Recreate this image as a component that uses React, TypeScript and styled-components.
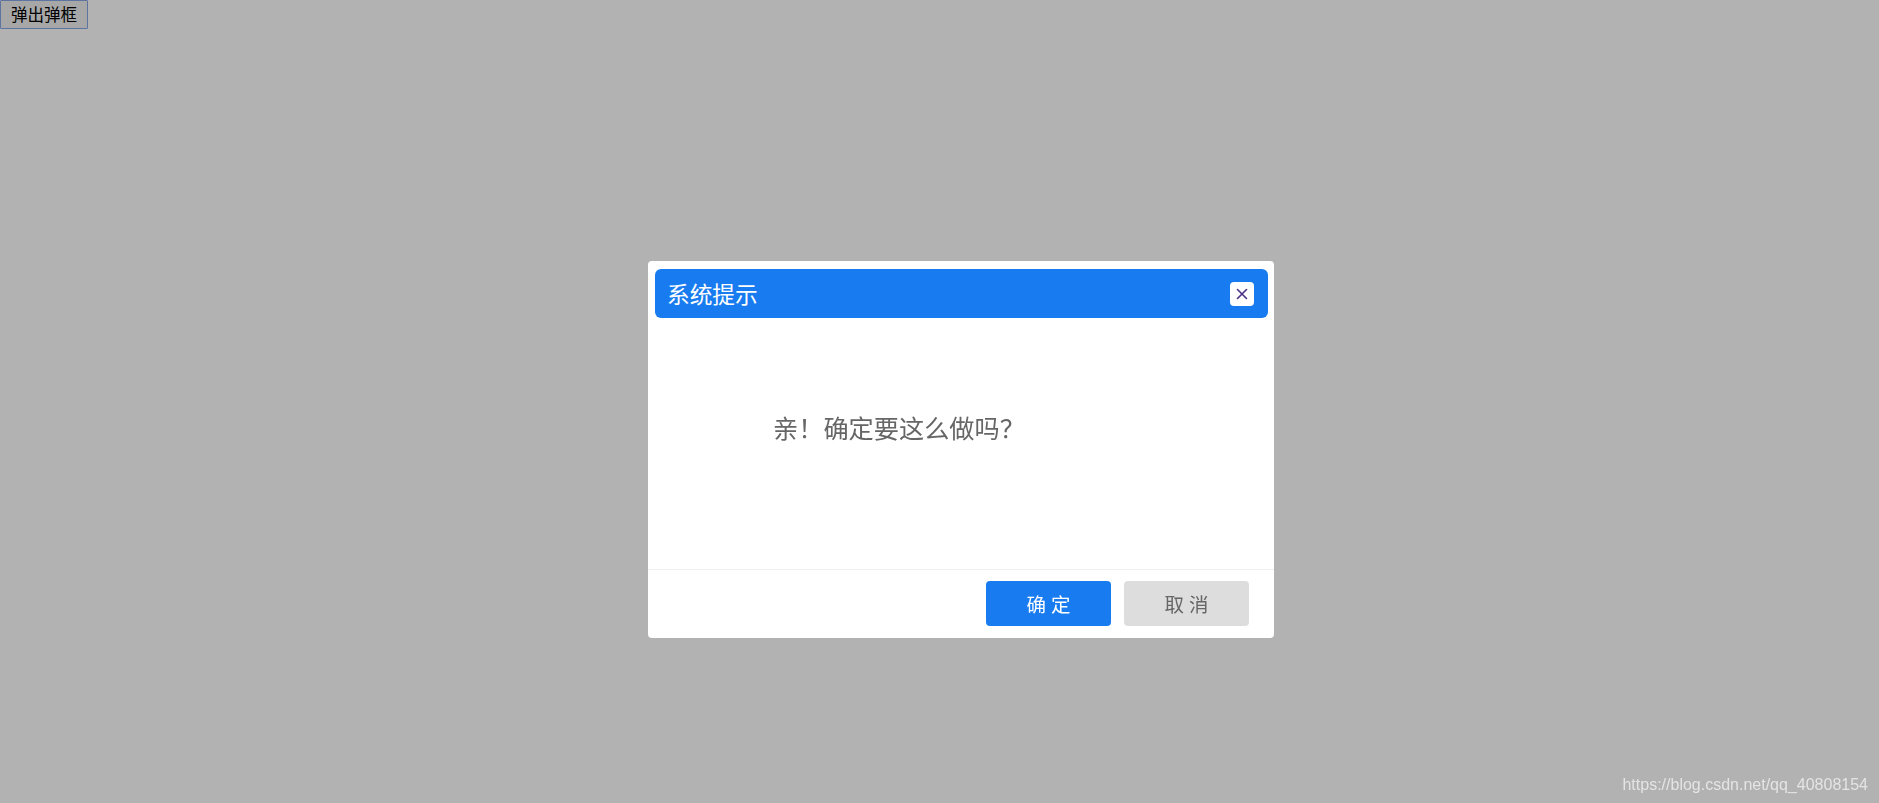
import React, { useState } from 'react'
import styled, { createGlobalStyle } from 'styled-components'

const GlobalStyle = createGlobalStyle`
  html, body {
    margin: 0;
    padding: 0;
    background: #ffffff;
    font-family: "Noto Sans CJK SC", "Liberation Sans", sans-serif;
  }
`

const OpenButton = styled.button`
  display: block;
  margin: 0;
  height: 29px;
  padding: 0 10px;
  border: 1px solid #86a6e6;
  border-radius: 1px;
  background: #f0f0f0;
  color: #000;
  font-family: "Noto Sans CJK SC", sans-serif;
  font-size: 16.5px;
  line-height: 27px;
  cursor: pointer;
`

const Overlay = styled.div`
  position: fixed;
  inset: 0;
  background: rgba(0, 0, 0, 0.3);
  z-index: 500;
`

const Dialog = styled.div`
  position: fixed;
  left: 648px;
  top: 261px;
  width: 626px;
  background: #ffffff;
  border-radius: 4px;
  display: flex;
  flex-direction: column;
  z-index: 700;
`

const HeaderWrap = styled.div`
  padding: 8px 6px 0 7px;
`

const Header = styled.div`
  height: 49px;
  border-radius: 6px;
  background: #187cf0;
  display: flex;
  align-items: center;
  justify-content: space-between;
  padding: 0 14px 0 12px;
`

const HeaderText = styled.div`
  color: #ffffff;
  font-size: 22.7px;
  line-height: 30px;
`

const CloseButton = styled.button`
  width: 24px;
  height: 24px;
  padding: 0;
  border: none;
  border-radius: 4px;
  background: #ffffff;
  display: flex;
  align-items: center;
  justify-content: center;
  cursor: pointer;
`

const Body = styled.div`
  height: 251px;
  box-sizing: border-box;
  padding: 93px 0 0 125px;
  color: #666666;
  font-size: 25.2px;
  line-height: 32px;
`

const Footer = styled.div`
  border-top: 1px solid #eeeeee;
  padding: 11px 25px 12px;
  display: flex;
  justify-content: flex-end;
  gap: 13px;
`

const FooterButton = styled.button<{ $primary?: boolean }>`
  width: 125px;
  height: 45px;
  border: none;
  border-radius: 4px;
  background: ${({ $primary }) => ($primary ? '#187cf0' : '#dddddd')};
  color: ${({ $primary }) => ($primary ? '#ffffff' : '#666666')};
  font-family: "Noto Sans CJK SC", sans-serif;
  font-size: 19.5px;
  letter-spacing: 5px;
  padding: 0 0 0 5px;
  cursor: pointer;
`

const Watermark = styled.div`
  position: fixed;
  right: 11px;
  bottom: 9px;
  color: #e4e4e4;
  font-family: "Liberation Sans", Arial, sans-serif;
  font-size: 16px;
  z-index: 800;
`

const App = () => {
  const [open, setOpen] = useState(true)

  return (
    <>
      <GlobalStyle />
      <OpenButton onClick={() => setOpen(true)}>弹出弹框</OpenButton>
      {open && (
        <>
          <Overlay />
          <Dialog role="dialog" aria-modal>
            <HeaderWrap>
              <Header>
                <HeaderText>系统提示</HeaderText>
                <CloseButton aria-label="Close" onClick={() => setOpen(false)}>
                  <svg width="12" height="12" viewBox="0 0 12 12">
                    <path
                      d="M1.5 1.5 L10.5 10.5 M10.5 1.5 L1.5 10.5"
                      stroke="#4b2f86"
                      strokeWidth="1.6"
                      strokeLinecap="round"
                    />
                  </svg>
                </CloseButton>
              </Header>
            </HeaderWrap>
            <Body>亲！确定要这么做吗？</Body>
            <Footer>
              <FooterButton $primary onClick={() => setOpen(false)}>
                确定
              </FooterButton>
              <FooterButton onClick={() => setOpen(false)}>取消</FooterButton>
            </Footer>
          </Dialog>
        </>
      )}
      <Watermark>https://blog.csdn.net/qq_40808154</Watermark>
    </>
  )
}

export default App
